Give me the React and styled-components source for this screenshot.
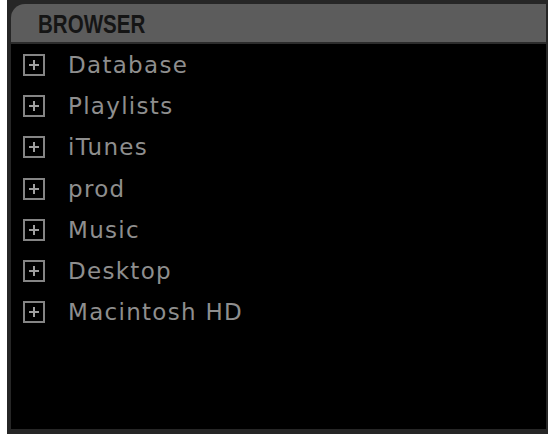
import React from "react";
import styled, { createGlobalStyle } from "styled-components";

const GlobalStyle = createGlobalStyle`
  html, body {
    margin: 0;
    padding: 0;
    background: #ffffff;
  }
`;

const Frame = styled.div`
  margin-left: 7px;
  width: 541px;
  height: 434px;
  box-sizing: border-box;
  background: #262626;
  padding: 4px 2px 5px 4px;
  display: flex;
  flex-direction: column;
`;

const Header = styled.div`
  height: 38px;
  flex: none;
  background: #5c5c5c;
  border-top-left-radius: 14px;
  border-bottom: 2px solid #2c2c2c;
  display: flex;
  align-items: center;
  padding-left: 27px;
`;

const Title = styled.span`
  display: inline-block;
  font-family: "Liberation Sans", "DejaVu Sans", sans-serif;
  font-weight: bold;
  font-size: 26px;
  line-height: 1;
  color: #151515;
  transform: scaleX(0.79);
  transform-origin: left center;
  margin-top: 2px;
`;

const List = styled.div`
  flex: 1;
  background: #000;
  padding-top: 0;
  display: flex;
  flex-direction: column;
`;

const Row = styled.div`
  height: 41.3px;
  display: flex;
  align-items: center;
  padding-left: 12px;
`;

const Expander = styled.span`
  width: 22px;
  height: 22px;
  box-sizing: border-box;
  border: 2px solid #858585;
  position: relative;
  flex: none;

  &::before,
  &::after {
    content: "";
    position: absolute;
    background: #a0a0a0;
  }
  &::before {
    left: 4px;
    right: 4px;
    top: 8px;
    height: 2px;
  }
  &::after {
    top: 4px;
    bottom: 4px;
    left: 8px;
    width: 2px;
  }
`;

const Label = styled.span`
  margin-left: 23px;
  font-family: "DejaVu Sans", sans-serif;
  font-size: 23px;
  letter-spacing: 1.3px;
  color: #8e8e8e;
`;

const folders = [
  "Database",
  "Playlists",
  "iTunes",
  "prod",
  "Music",
  "Desktop",
  "Macintosh HD",
];

export default function App() {
  return (
    <>
      <GlobalStyle />
      <Frame>
        <Header>
          <Title>BROWSER</Title>
        </Header>
        <List>
          {folders.map((name) => (
            <Row key={name}>
              <Expander />
              <Label>{name}</Label>
            </Row>
          ))}
        </List>
      </Frame>
    </>
  );
}
